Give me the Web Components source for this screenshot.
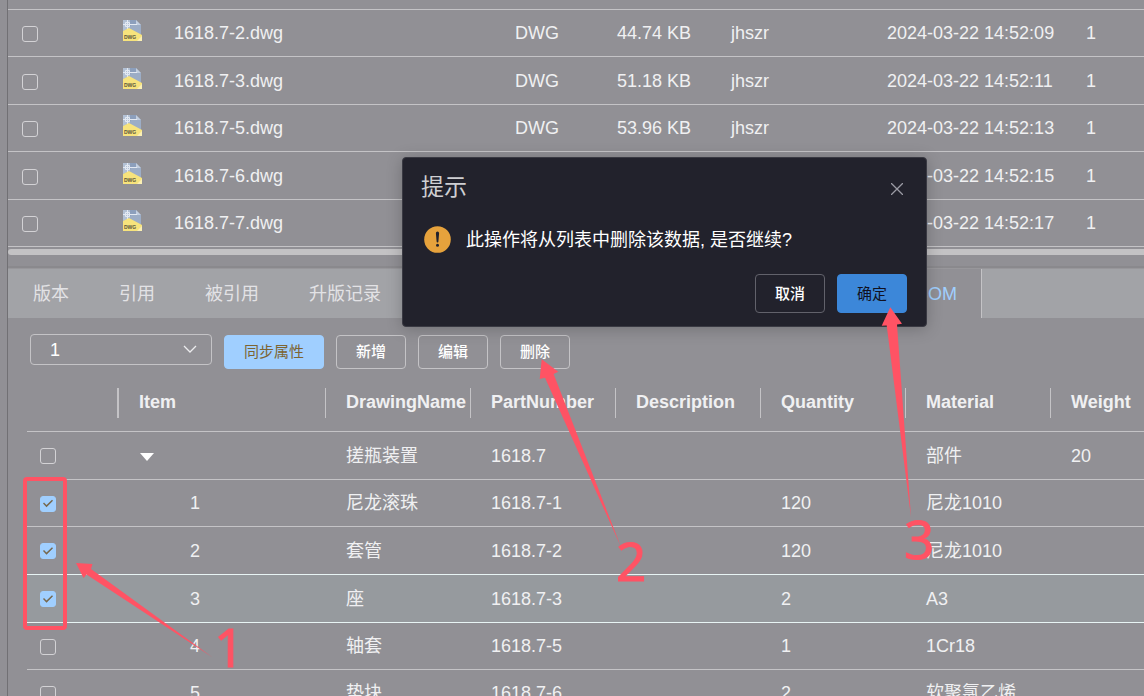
<!DOCTYPE html>
<html lang="zh-CN">
<head>
<meta charset="utf-8">
<title>BOM</title>
<style>
  html, body { margin: 0; height: 100%; }
  body {
    --line: #c4c3c6;
    --ink: #f0f0f2;
    --panel: #a2a3a7;
    --accent: #a0cfff;
    --mark: #ff5364;
    background: #919095;
    color: var(--ink);
    font-family: "Liberation Sans", "Noto Sans CJK SC", sans-serif;
    font-size: 18px;
    overflow: hidden;
  }
</style>
</head>
<body>
<bom-page></bom-page>
<script>
const define = (name, html, setup) => customElements.define(name, class extends HTMLElement {
  constructor() {
    super();
    this.attachShadow({ mode: 'open' }).innerHTML = html;
    if (setup) setup.call(this, this.shadowRoot);
  }
});

const tableCss = `
  :host { display: block; overflow: hidden; }
  table { width: 100%; border-collapse: separate; border-spacing: 0; table-layout: fixed; }
  td, th { box-sizing: border-box; padding: 0; text-align: left; white-space: nowrap; line-height: 20px; border-bottom: 1px solid var(--line); }
  td { padding-left: 21px; }
`;

define('check-box', `
  <style>
    :host { display: block; width: 16px; height: 16px; }
    input { appearance: none; display: grid; place-items: center; box-sizing: border-box; width: 16px; height: 16px; margin: 0;
      border: 1px solid #d3d2d5; border-radius: 3px; }
    input:checked { background: var(--accent); border-color: var(--accent); }
    input:checked::before { content: ""; width: 10px; height: 10px; background: #77694f;
      clip-path: polygon(0 50%, 10% 40%, 35% 66%, 90% 12%, 100% 22%, 35% 87%); }
  </style>
  <input type="checkbox">`, function (root) {
    const input = root.querySelector('input');
    input.checked = this.hasAttribute('checked');
    input.setAttribute('aria-label', this.getAttribute('label') || '');
  });

define('dwg-icon', `
  <style>:host { display: block; width: 20px; height: 21px; } svg { display: block; }</style>
  <svg width="20" height="21" viewBox="0 0 20 21" aria-hidden="true">
    <path d="M0 0H13L18 5V18H0Z" fill="#8c9fbc"/>
    <path d="M8 5H18V16L6 9Z" fill="#9cadc6"/>
    <path d="M13 0V5H18Z" fill="#c3cfe0"/>
    <path d="M0 0H7V8L0 11Z" fill="#b3c1d5"/>
    <path d="M2.5 2.5H6.5V6.5H2.5ZM4.5 0V10M0 4.5H14" fill="none" stroke="#e3e9f2" stroke-width="1"/>
    <path d="M0 11L6 8L19 15V21H0Z" fill="#f7e37c"/>
    <path d="M14 21L19 16V21Z" fill="#fbf0b4"/>
    <text x="1" y="19" font-size="5" font-weight="700" font-family="Liberation Sans" fill="#5a553c">DWG</text>
  </svg>`);

define('file-table', `
  <style>${tableCss}
    tr { height: 48px; }
    tr:nth-child(even) { height: 47px; }
    tr:first-child { height: 10px; }
    tr:first-child td { line-height: 8px; }
    check-box { margin-left: 14px; margin-top: 2px; }
    td:first-child { padding-left: 0; }
    td:nth-child(2) { padding-left: 63px; }
    dwg-icon { margin-bottom: 5px; }
    .bar { height: 6px; margin-top: 2px; border-radius: 3px 0 0 3px; background: #c3c2c4; }
  </style>
  <table>
    <colgroup><col style="width:52px"><col style="width:93px"><col style="width:341px"><col style="width:102px"><col style="width:114px"><col style="width:156px"><col style="width:199px"><col></colgroup>
    <tbody><tr><td colspan="8"></td></tr></tbody>
  </table>
  <div class="bar"></div>`, function (root) {
    const rows = [['2', '44.74', '09'], ['3', '51.18', '11'], ['5', '53.96', '13'], ['6', '', '15'], ['7', '', '17']];
    root.querySelector('tbody').insertAdjacentHTML('beforeend', rows.map(([n, size, sec]) => `
      <tr><td><check-box label="1618.7-${n}.dwg"></check-box></td><td><dwg-icon></dwg-icon></td><td>1618.7-${n}.dwg</td>
      <td>${size && 'DWG'}</td><td>${size && size + ' KB'}</td><td>${size && 'jhszr'}</td>
      <td>2024-03-22 14:52:${sec}</td><td>1</td></tr>`).join(''));
  });

define('tab-bar', `
  <style>
    :host { display: flex; height: 49px; margin-top: 14px; background: var(--panel); box-shadow: 0 -1px #98979b, 0 -3px #8a898d; }
    a { padding: 0 25px; line-height: 50px; color: #e2e2e5; text-decoration: none; white-space: nowrap; }
    a:first-child { padding-left: 24px; }
    a.active { margin-left: 486px; background: #919095; border-right: 1px solid var(--line); color: var(--accent); padding: 0 24px; }
  </style>
  <a href="#v">版本</a><a href="#r">引用</a><a href="#b">被引用</a><a href="#u">升版记录</a><a href="#bom" class="active">BOM</a>`);

define('action-button', `
  <style>
    :host { display: block; }
    button { box-sizing: border-box; width: 100%; height: 100%; padding: 0; border: 1px solid var(--edge, var(--line)); border-radius: 4px;
      background: var(--fill, transparent); color: var(--label, #fff); font: var(--weight, 500) 15px/20px "Liberation Sans", "Noto Sans CJK SC", sans-serif; }
  </style>
  <button type="button"><slot></slot></button>`);

define('tool-bar', `
  <style>
    :host { display: flex; gap: 12px; padding: 16px 22px 0; }
    .pick { position: relative; width: 182px; height: 31px; }
    select { appearance: none; box-sizing: border-box; width: 100%; height: 31px; padding: 0 19px; border: 1px solid var(--line);
      border-radius: 4px; background: transparent; color: #fff; font: 18px/28px "Liberation Sans", sans-serif; }
    svg { position: absolute; right: 15px; top: 10px; pointer-events: none; }
    action-button { width: 70px; height: 34px; margin-top: 1px; }
    .sync { width: 100px; --fill: var(--accent); --edge: var(--accent); --label: #7d6432; --weight: 400; }
  </style>
  <div class="pick"><select aria-label="版本"><option>1</option></select>
    <svg width="14" height="10" viewBox="0 0 14 10"><path d="M1 2L7 8L13 2" fill="none" stroke="#ececee" stroke-width="1.3"/></svg></div>
  <action-button class="sync">同步属性</action-button>
  <action-button>新增</action-button><action-button>编辑</action-button><action-button>删除</action-button>`);

define('bom-table', `
  <style>${tableCss}
    :host { margin: 2px 0 0 19px; }
    thead tr { height: 61px; }
    th span { display: block; height: 30px; margin-top: 3px; line-height: 28px; padding-left: 20px; border-left: 1px solid var(--line); }
    th:nth-child(2) span { border-left-width: 2px; }
    tbody tr { height: 47px; }
    tbody tr:nth-child(odd), tbody tr.hover { height: 48px; }
    tbody tr.hover + tr { height: 47px; }
    td:first-child { padding-left: 13px; }
    td:nth-child(2) { padding-left: 73px; }
    tr.root td:nth-child(2) { padding-left: 23px; }
    tr.hover td { background: #969a9e; border-bottom-color: #e8f4f4; }
    tr.above td { border-bottom-color: #e8f4f4; }
    check-box { margin-top: 1px; }
    svg { display: block; margin-top: 3px; }
  </style>
  <table>
    <colgroup><col style="width:90px"><col style="width:208px"><col style="width:145px"><col style="width:145px"><col style="width:145px"><col style="width:145px"><col style="width:145px"><col></colgroup>
    <thead><tr><th></th>${['Item', 'DrawingName', 'PartNumber', 'Description', 'Quantity', 'Material', 'Weight'].map(t => `<th><span>${t}</span></th>`).join('')}</tr></thead>
    <tbody></tbody>
  </table>`, function (root) {
    const arrow = '<svg width="14" height="8" viewBox="0 0 14 8"><path d="M0 0H14L7 8Z" fill="#fff"/></svg>';
    const rows = [
      ['root', '', arrow, '搓瓶装置', '1618.7', '', '部件', '20'],
      ['', 'checked', '1', '尼龙滚珠', '1618.7-1', '120', '尼龙1010', ''],
      ['above', 'checked', '2', '套管', '1618.7-2', '120', '尼龙1010', ''],
      ['hover', 'checked', '3', '座', '1618.7-3', '2', 'A3', ''],
      ['', '', '4', '轴套', '1618.7-5', '1', '1Cr18', ''],
      ['', '', '5', '垫块', '1618.7-6', '2', '软聚氯乙烯', '']
    ];
    root.querySelector('tbody').innerHTML = rows.map(([cls, on, item, name, part, qty, mat, weight]) => `
      <tr class="${cls}"><td><check-box ${on} label="${name}"></check-box></td><td>${item}</td><td>${name}</td><td>${part}</td>
      <td></td><td>${qty}</td><td>${mat}</td><td>${weight}</td></tr>`).join('');
  });

define('confirm-dialog', `
  <style>
    :host { position: absolute; left: 402px; top: 157px; width: 525px; }
    dialog { position: static; display: block; box-sizing: border-box; width: 100%; margin: 0; padding: 13px 19px 13px 18px; border: 1px solid #3a3a43;
      border-radius: 4px; background: #22222c; color: #fff; box-shadow: 0 2px 16px rgba(0, 0, 0, .22); }
    header { display: flex; justify-content: space-between; align-items: center; height: 32px; }
    h2 { margin: 0; font-size: 23px; line-height: 32px; font-weight: 400; color: #cfcfd2; }
    .close { width: 20px; height: 20px; padding: 0; border: 0; background: none; margin-top: 4px; display: grid; place-items: center; }
    .msg { display: flex; align-items: center; gap: 15px; margin: 21px 0 19px 3px; }
    p { margin: 0; line-height: 30px; padding-top: 1px; }
    footer { display: flex; justify-content: flex-end; gap: 12px; }
    action-button { width: 70px; height: 39px; --edge: #62626b; }
    .ok { --fill: #3c87d9; --edge: #3c87d9; --label: #111120; --weight: 400; }
  </style>
  <dialog open aria-labelledby="t">
    <header><h2 id="t">提示</h2>
      <button class="close" type="button" aria-label="关闭"><svg width="12" height="12" viewBox="0 0 12 12"><path d="M0 0L12 12M12 0L0 12" stroke="#9b9ba4" stroke-width="1.3"/></svg></button></header>
    <div class="msg">
      <svg width="27" height="27" viewBox="0 0 27 27"><circle cx="13.5" cy="13.5" r="13.3" fill="#e6a23c"/><path d="M11.9 7.2a1.6 1.6 0 0 1 3.2 0L14.4 15.5a.9.9 0 0 1-1.8 0Z" fill="#22222c"/><circle cx="13.5" cy="19.3" r="1.5" fill="#22222c"/></svg>
      <p>此操作将从列表中删除该数据, 是否继续?</p></div>
    <footer><action-button>取消</action-button><action-button class="ok">确定</action-button></footer>
  </dialog>`);

define('step-marks', `
  <style>
    :host { position: absolute; left: 0; top: 0; pointer-events: none; }
    svg { display: block; fill: var(--mark); }
    text { font: 53px "Noto Sans", sans-serif; stroke: var(--mark); stroke-width: 1px; }
  </style>
  <svg width="1144" height="696" viewBox="0 0 1144 696">
    <rect x="25" y="479" width="40" height="149" rx="2" fill="none" stroke="var(--mark)" stroke-width="4"/>
    <path d="M76 563L92.5 564L91 569L212 657L86.5 574.5L83.5 578Z"/>
    <path d="M541.7 359.3L558.3 371.7L553.6 374L621 547L545 377.7L539.7 379Z"/>
    <path d="M890.3 307.3L902 323.7L897 324.5L911 517L886.7 325.5L881.7 325.7Z"/>
    <text x="214" y="667">1</text>
    <text x="616" y="581">2</text>
    <text x="904" y="559">3</text>
  </svg>`);

define('bom-page', `
  <style>
    :host { display: block; position: relative; height: 100%; overflow: hidden; }
    main { height: 100%; margin-left: 7px; border-left: 1px solid #717074; }
  </style>
  <main><file-table></file-table><tab-bar></tab-bar><tool-bar></tool-bar><bom-table></bom-table></main>
  <confirm-dialog></confirm-dialog>
  <step-marks></step-marks>`);
</script>
</body>
</html>
